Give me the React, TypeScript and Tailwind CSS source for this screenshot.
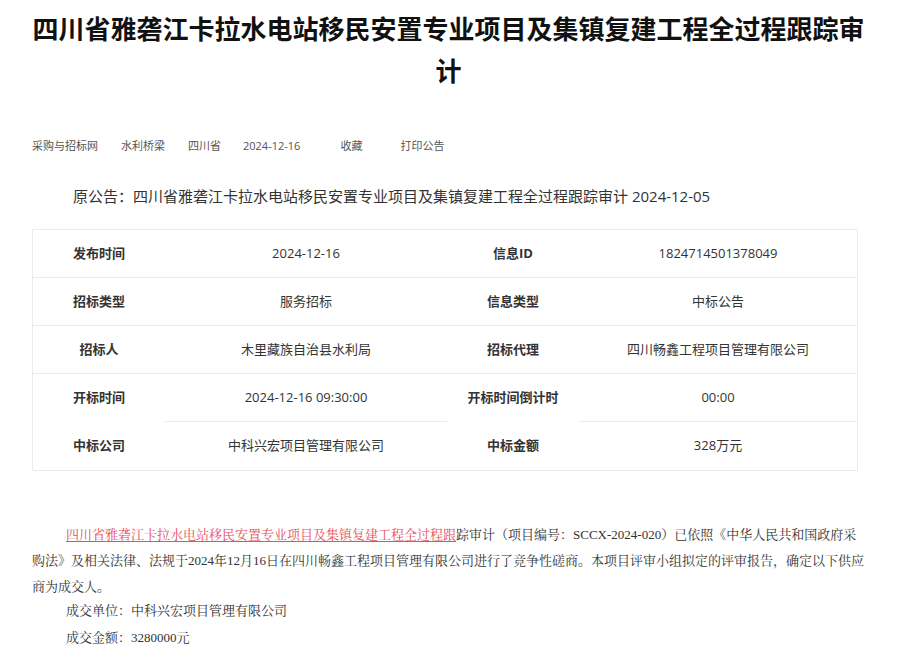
import React from "react";

const sans = 'font-["Open_Sans","Noto_Sans_CJK_SC",sans-serif]';

type Cell = { label: string; value: string };
const rows: { a: Cell; b: Cell; noLabelBorder?: boolean }[] = [
  { a: { label: "发布时间", value: "2024-12-16" }, b: { label: "信息ID", value: "1824714501378049" } },
  { a: { label: "招标类型", value: "服务招标" }, b: { label: "信息类型", value: "中标公告" } },
  { a: { label: "招标人", value: "木里藏族自治县水利局" }, b: { label: "招标代理", value: "四川畅鑫工程项目管理有限公司" } },
  { a: { label: "开标时间", value: "2024-12-16 09:30:00" }, b: { label: "开标时间倒计时", value: "00:00" }, noLabelBorder: true },
  { a: { label: "中标公司", value: "中科兴宏项目管理有限公司" }, b: { label: "中标金额", value: "328万元" } },
];

export default function App() {
  return (
    <div className={`w-[897px] h-[665px] bg-white overflow-hidden ${sans} text-[#333]`}>
      <h1 className='mx-auto w-[840px] pt-[7px] text-center text-[26px] leading-[42px] font-bold text-[#111] font-["Noto_Sans_CJK_SC",sans-serif]'>
        四川省雅砻江卡拉水电站移民安置专业项目及集镇复建工程全过程跟踪审计
      </h1>

      <div className="mt-[47px] flex items-center pl-[32px] text-[11px] leading-[16px] text-[#555]">
        <span>采购与招标网</span>
        <span className="ml-[23px]">水利桥梁</span>
        <span className="ml-[23px]">四川省</span>
        <span className="ml-[22px]">2024-12-16</span>
        <span className="ml-[40px]">收藏</span>
        <span className="ml-[38px]">打印公告</span>
      </div>

      <div className="mt-[31px] pl-[73px] text-[15px] leading-[22px] text-[#333]">
        原公告：四川省雅砻江卡拉水电站移民安置专业项目及集镇复建工程全过程跟踪审计 2024-12-05
      </div>

      <div className="mt-[22px] ml-[32px] w-[826px] border border-[#ebebeb]">
        {rows.map((r, i) => {
          const last = i === rows.length - 1;
          const bv = last ? "" : "border-b border-[#ebebeb]";
          const bl = last ? "" : r.noLabelBorder ? "border-b border-transparent" : "border-b border-[#ebebeb]";
          return (
            <div key={i} className="grid grid-cols-[132px_282px_132px_278px] text-[13px]">
              <div className={`h-[48px] flex items-center justify-center font-bold text-[#333] ${bl}`}>{r.a.label}</div>
              <div className={`h-[48px] flex items-center justify-center text-[#333] ${bv}`}>{r.a.value}</div>
              <div className={`h-[48px] flex items-center justify-center font-bold text-[#333] ${bl}`}>{r.b.label}</div>
              <div className={`h-[48px] flex items-center justify-center text-[#333] ${bv}`}>{r.b.value}</div>
            </div>
          );
        })}
      </div>

      <div className='mt-[51px] ml-[32px] w-[840px] text-[13px] leading-[26px] text-[#333] font-["Liberation_Serif","Noto_Serif_CJK_SC","Noto_Sans_CJK_SC",serif]'>
        <p className="indent-[34px]">
          <span className="text-[#e5505c] underline decoration-[#e5505c] underline-offset-2">
            四川省雅砻江卡拉水电站移民安置专业项目及集镇复建工程全过程跟
          </span>
          踪审计（项目编号：SCCX-2024-020）已依照《中华人民共和国政府采
          <br />
          购法》及相关法律、法规于2024年12月16日在四川畅鑫工程项目管理有限公司进行了竞争性磋商。本项目评审小组拟定的评审报告，确定以下供应
          <br />
          商为成交人。
        </p>
        <p className="indent-[34px] -mt-[2px]">成交单位：中科兴宏项目管理有限公司</p>
        <p className="indent-[34px] mt-[1px]">成交金额：3280000元</p>
      </div>
    </div>
  );
}
